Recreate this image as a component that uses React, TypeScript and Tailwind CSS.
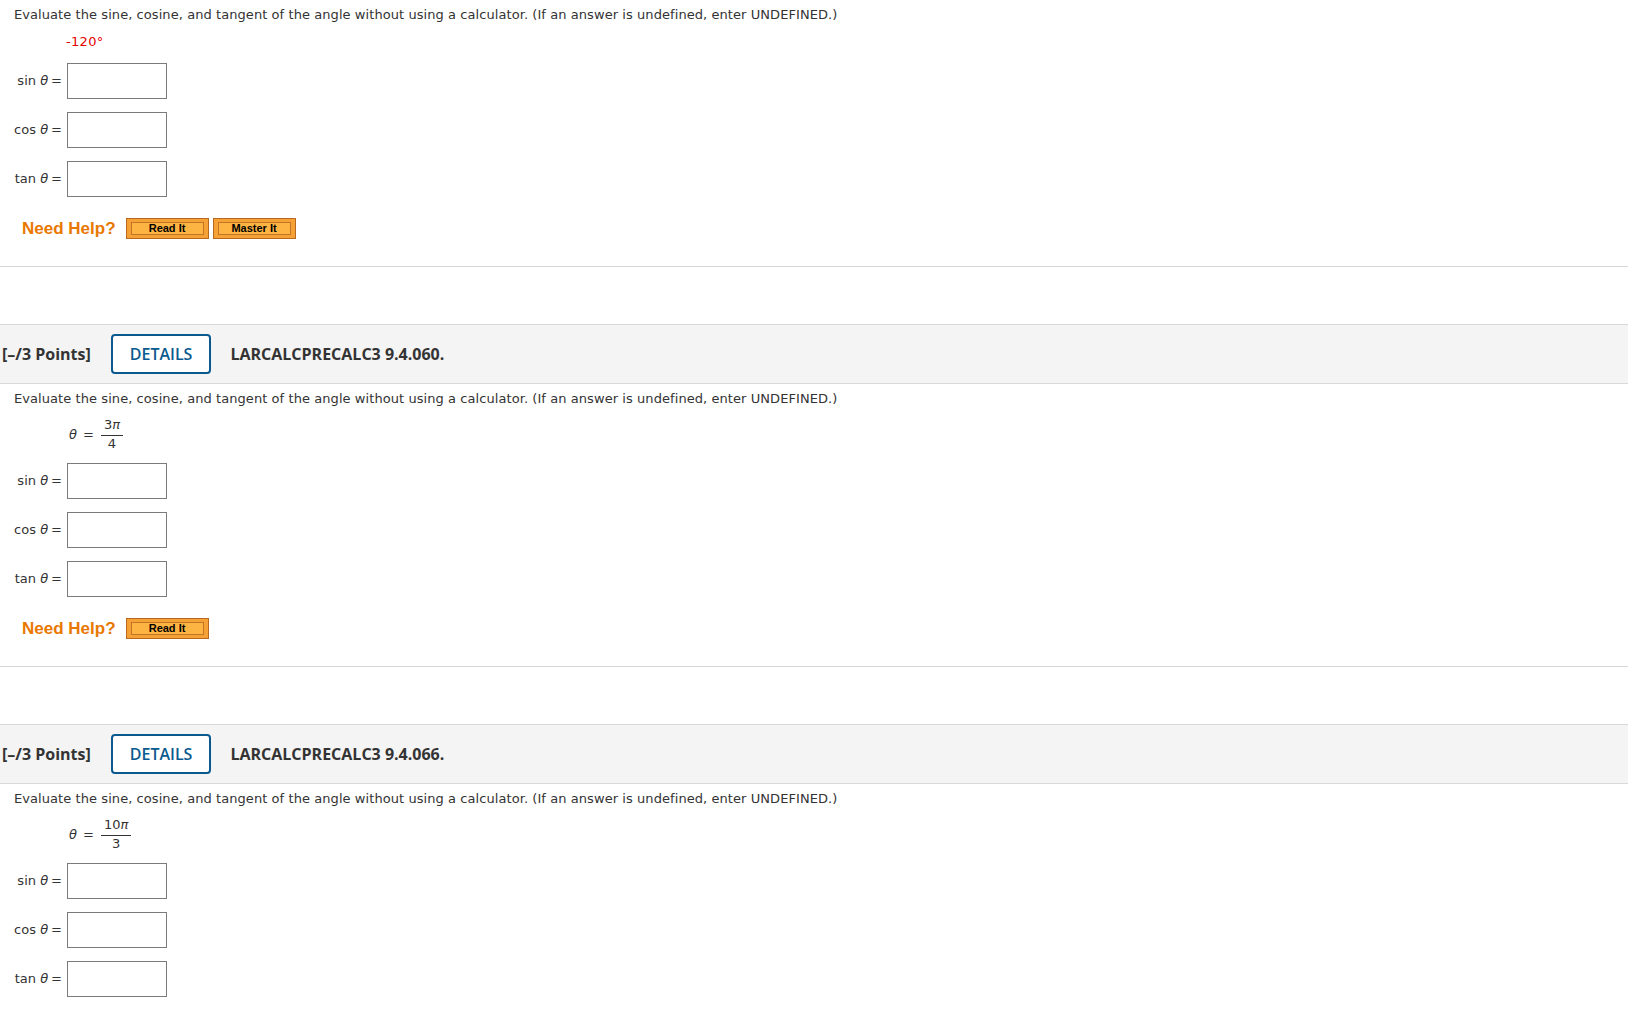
const body = "Evaluate the sine, cosine, and tangent of the angle without using a calculator. (If an answer is undefined, enter UNDEFINED.)";

const verdana = "font-['DejaVu_Sans',Verdana,sans-serif]";

function Theta() {
  return <span className="italic">θ</span>;
}

function AnswerRow({ fn }: { fn: string }) {
  return (
    <div className="flex items-center">
      <div className="w-[62px] text-right text-[13px] leading-4 text-[#333]">
        {fn} <Theta />
        <span className="ml-[3px]">=</span>
      </div>
      <div className="ml-[5px] h-[36px] w-[100px] border border-[#7b7b7b] bg-white" />
    </div>
  );
}

function HelpButton({ label }: { label: string }) {
  return (
    <button className="flex h-[21px] w-[83px] items-stretch border border-[#b9691f] bg-[#f6a136] px-[4px] py-[3px]">
      <span className="flex flex-1 items-center justify-center border border-[#c27526] bg-[#fdb443] font-['Liberation_Sans',Arial,sans-serif] text-[11px] font-bold leading-none text-black">
        {label}
      </span>
    </button>
  );
}

function Fraction({ num }: { num: string }) {
  return (
    <div className="ml-[69px] mt-[11px] flex items-center text-[13px] text-[#333]">
      <Theta />
      <span className="ml-[6px] mr-[7px]">=</span>
      <div className="flex flex-col items-center">
        <div className="border-b border-[#333] px-[3px] pb-[3px] leading-[14px]">
          {num}
          <span className="italic">π</span>
        </div>
        <div className="pt-[1px] leading-[14px]">{num === "3" ? "4" : "3"}</div>
      </div>
    </div>
  );
}

function Header({ id }: { id: string }) {
  return (
    <div className="mt-[57px] flex h-[60px] items-center border-y border-[#d9d9d9] bg-[#f4f4f4] font-['Open_Sans',sans-serif] text-[16px] text-[#333]">
      <span className="ml-[2px] font-bold">[–/3 Points]</span>
      <span className="ml-[20px] flex h-[40px] items-center rounded-[4px] border-2 border-[#0b5a8f] bg-white px-[17px] font-semibold text-[#0b5a8f]">
        DETAILS
      </span>
      <span className="ml-[19px] font-bold">LARCALCPRECALC3 {id}</span>
    </div>
  );
}

function Question({ angle, frac, master, last }: { angle?: string; frac?: string; master?: boolean; last?: boolean }) {
  return (
    <div className={`flex flex-col ${verdana}`}>
      <p className="pl-[14px] pt-[7px] text-[13px] leading-4 tracking-[0.07px] text-[#333]">{body}</p>
      {angle ? (
        <div className="ml-[66px] mt-[11px] text-[13px] leading-4 tracking-[0.3px] text-[#e50000]">{angle}</div>
      ) : (
        <Fraction num={frac ?? "3"} />
      )}
      <div className={`${angle ? "mt-[13px]" : "mt-[12px]"} flex flex-col gap-[13px]`}>
        <AnswerRow fn="sin" />
        <AnswerRow fn="cos" />
        <AnswerRow fn="tan" />
      </div>
      {!last && (
        <>
          <div className="mt-[21px] flex h-[21px] items-center">
            <span className="ml-[22px] font-['Liberation_Sans',Arial,sans-serif] text-[17px] font-bold leading-[21px] text-[#e97800]">
              Need Help?
            </span>
            <div className="ml-[10px] flex gap-[4px]">
              <HelpButton label="Read It" />
              {master && <HelpButton label="Master It" />}
            </div>
          </div>
          <div className="mt-[27px] border-b border-[#d7d7d7]" />
        </>
      )}
    </div>
  );
}

export default function App() {
  return (
    <div className="min-h-screen w-full overflow-hidden bg-white">
      <Question angle="-120°" master />
      <Header id="9.4.060." />
      <Question frac="3" />
      <Header id="9.4.066." />
      <Question frac="10" last />
    </div>
  );
}
